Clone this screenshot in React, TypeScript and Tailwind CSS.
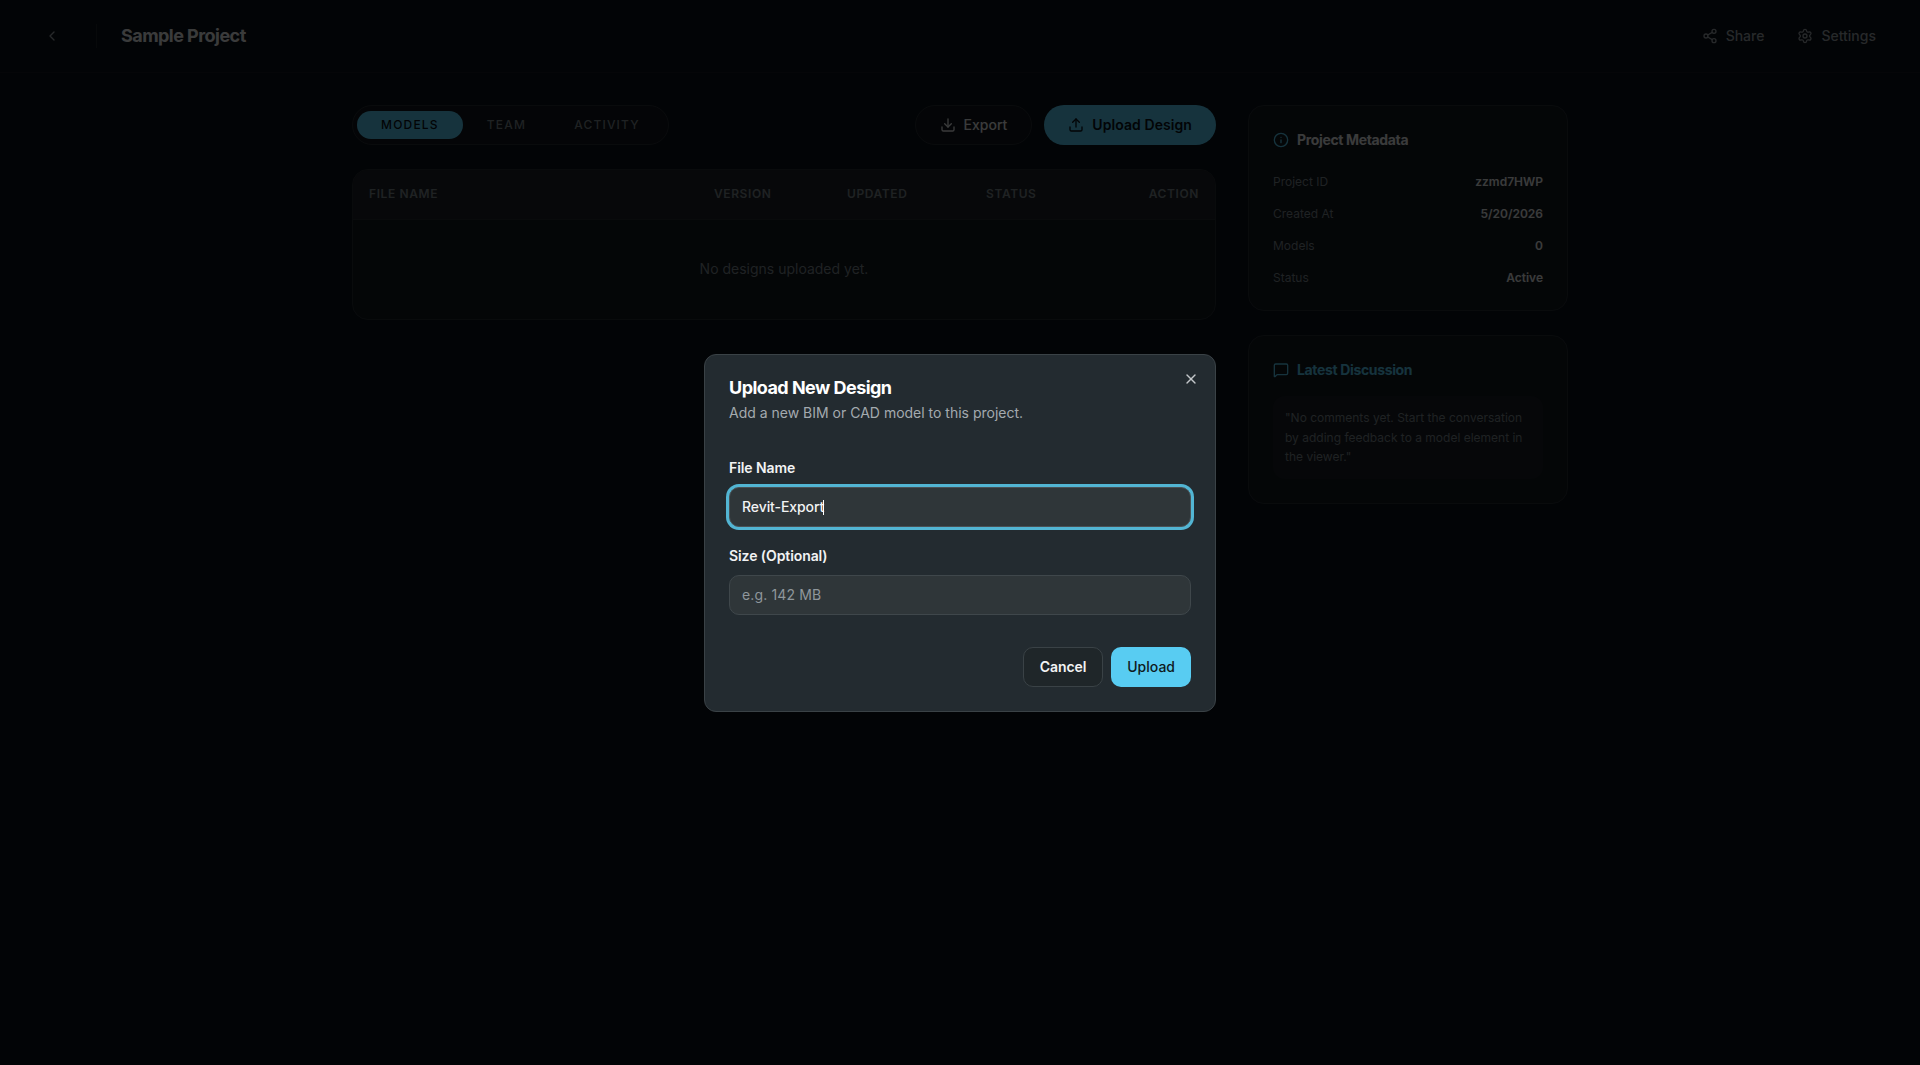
import { useEffect, useRef } from "react";
import { ChevronLeft, Share2, Settings, Download, Upload, Info, MessageSquare, X } from "lucide-react";

function Row({ k, v }: { k: string; v: string }) {
  return (
    <div className="flex items-center justify-between text-xs leading-4">
      <span className="text-[#7c868d]">{k}</span>
      <span className="font-semibold text-[#e8eaec]">{v}</span>
    </div>
  );
}

export default function App() {
  const ref = useRef<HTMLInputElement>(null);
  useEffect(() => {
    const el = ref.current;
    if (el) {
      el.focus();
      el.setSelectionRange(el.value.length, el.value.length);
    }
  }, []);
  return (
    <div className="min-h-screen bg-[#0a1018] font-['Inter',sans-serif] text-[#e8eaec]">
      <header className="flex h-[73px] items-center justify-between border-b border-[#141a20] px-8">
        <div className="flex items-center">
          <button className="flex h-10 w-10 items-center justify-center text-[#9aa3a9]">
            <ChevronLeft size={16} />
          </button>
          <div className="mx-6 h-6 w-px bg-[#1e252b]" />
          <h1 className="text-lg font-bold tracking-[-0.03em]">Sample Project</h1>
        </div>
        <div className="flex items-center gap-[9px] text-sm font-medium text-[#9aa3a9]">
          <button className="flex items-center gap-2 px-3 py-2">
            <Share2 size={16} />
            Share
          </button>
          <button className="flex items-center gap-2 px-3 py-2">
            <Settings size={16} />
            Settings
          </button>
        </div>
      </header>

      <main className="mx-auto flex max-w-7xl gap-8 px-8 pt-8">
        <section className="flex min-w-0 flex-1 flex-col gap-6">
          <div className="flex items-center justify-between">
            <div className="flex h-10 items-center rounded-full border border-[#262d33] bg-[#10161c] p-1">
              <div className="rounded-full bg-[#58ccf2] px-6 py-[6px] text-xs font-medium tracking-[0.1em] text-[#0a1018]">MODELS</div>
              <div className="px-6 py-[6px] text-xs font-medium tracking-[0.1em] text-[#7c868d]">TEAM</div>
              <div className="px-6 py-[6px] text-xs font-medium tracking-[0.1em] text-[#7c868d]">ACTIVITY</div>
            </div>
            <div className="flex items-center gap-3">
              <button className="flex h-10 items-center gap-2 rounded-full border border-[#262d33] bg-[#10161c] px-6 text-sm font-medium text-[#e8eaec]">
                <Download size={16} />
                Export
              </button>
              <button className="flex h-10 items-center gap-2 rounded-full bg-[#58ccf2] px-6 text-sm font-semibold tracking-[0.005em] text-[#0a1018]">
                <Upload size={16} />
                Upload Design
              </button>
            </div>
          </div>

          <div className="overflow-hidden rounded-2xl border border-[#262d33] bg-[#12181e]">
            <div className="grid h-[50px] grid-cols-[345px_133px_139px_1fr_auto] items-center border-b border-[#262d33] bg-[#1e2328] px-4 pb-0.5 text-xs font-semibold tracking-wider text-[#7c868d]">
              <span>FILE NAME</span>
              <span>VERSION</span>
              <span>UPDATED</span>
              <span>STATUS</span>
              <span>ACTION</span>
            </div>
            <div className="flex h-[99px] items-center justify-center pb-0.5 text-sm text-[#7c868d]">No designs uploaded yet.</div>
          </div>
        </section>

        <aside className="flex w-80 shrink-0 flex-col gap-6">
          <div className="rounded-2xl border border-[#262d33] bg-[#12181e] p-6">
            <div className="flex items-center gap-2 text-sm font-bold tracking-[-0.025em]">
              <Info size={16} className="text-[#58ccf2]" />
              Project Metadata
            </div>
            <div className="mt-6 flex flex-col gap-4">
              <Row k="Project ID" v="zzmd7HWP" />
              <Row k="Created At" v="5/20/2026" />
              <Row k="Models" v="0" />
              <Row k="Status" v="Active" />
            </div>
          </div>
          <div className="rounded-2xl border border-[#262d33] bg-[#12181e] p-6">
            <div className="flex items-center gap-2 text-sm font-bold tracking-[-0.025em] text-[#58ccf2]">
              <MessageSquare size={16} />
              Latest Discussion
            </div>
            <div className="mt-4 rounded-xl bg-[#191f25] p-3 text-xs leading-[19.5px] text-[#7c868d]">
              "No comments yet. Start the conversation by adding feedback to a model element in the viewer."
            </div>
          </div>
        </aside>
      </main>

      <div className="fixed inset-0 bg-black/75" />
      <div className="fixed left-1/2 top-[354px] w-[512px] -translate-x-1/2 rounded-xl border border-[#3a4246] bg-[#232b30] p-6">
        <button className="absolute right-4 top-4 text-[#c3c7ca]">
          <X size={16} />
        </button>
        <h2 className="text-lg font-bold leading-[18px] tracking-[-0.03em] text-white">Upload New Design</h2>
        <p className="mt-1.5 text-sm leading-5 text-[#a3aaaf]">Add a new BIM or CAD model to this project.</p>
        <div className="mt-[35px] flex flex-col gap-[9px]">
          <label className="text-sm font-semibold leading-5 tracking-[-0.006em] text-[#f2f3f4]">File Name</label>
          <div className="relative">
            <input
              ref={ref}
              defaultValue="Revit-Export"
              className="block h-10 w-full rounded-[10px] border border-[#4a5155] bg-[#2f3639] px-3 pb-[2px] text-sm font-medium tracking-[-0.006em] text-[#f2f3f4] caret-transparent outline-none ring-[3px] ring-[#52b5d3]"
            />
            <span className="absolute left-[94px] top-[13px] h-[15px] w-px bg-white" />
          </div>
        </div>
        <div className="mt-[19px] flex flex-col gap-[9px]">
          <label className="text-sm font-semibold leading-5 tracking-[-0.006em] text-[#f2f3f4]">Size (Optional)</label>
          <input
            placeholder="e.g. 142 MB"
            className="block h-10 w-full rounded-[10px] border border-[#3f474b] bg-[#2f3639] px-3 pb-[2px] text-sm tracking-[0.01em] text-[#f2f3f4] outline-none placeholder:text-[#8f979c]"
          />
        </div>
        <div className="mt-8 flex justify-end gap-2">
          <button className="h-10 rounded-[10px] border border-[#3a4246] bg-[#1f2629] px-4 text-sm font-semibold tracking-[-0.006em] text-[#f2f3f4]">Cancel</button>
          <button className="h-10 rounded-[10px] bg-[#58ccf2] px-4 text-sm font-medium text-[#0f1a20]">Upload</button>
        </div>
      </div>
    </div>
  );
}
